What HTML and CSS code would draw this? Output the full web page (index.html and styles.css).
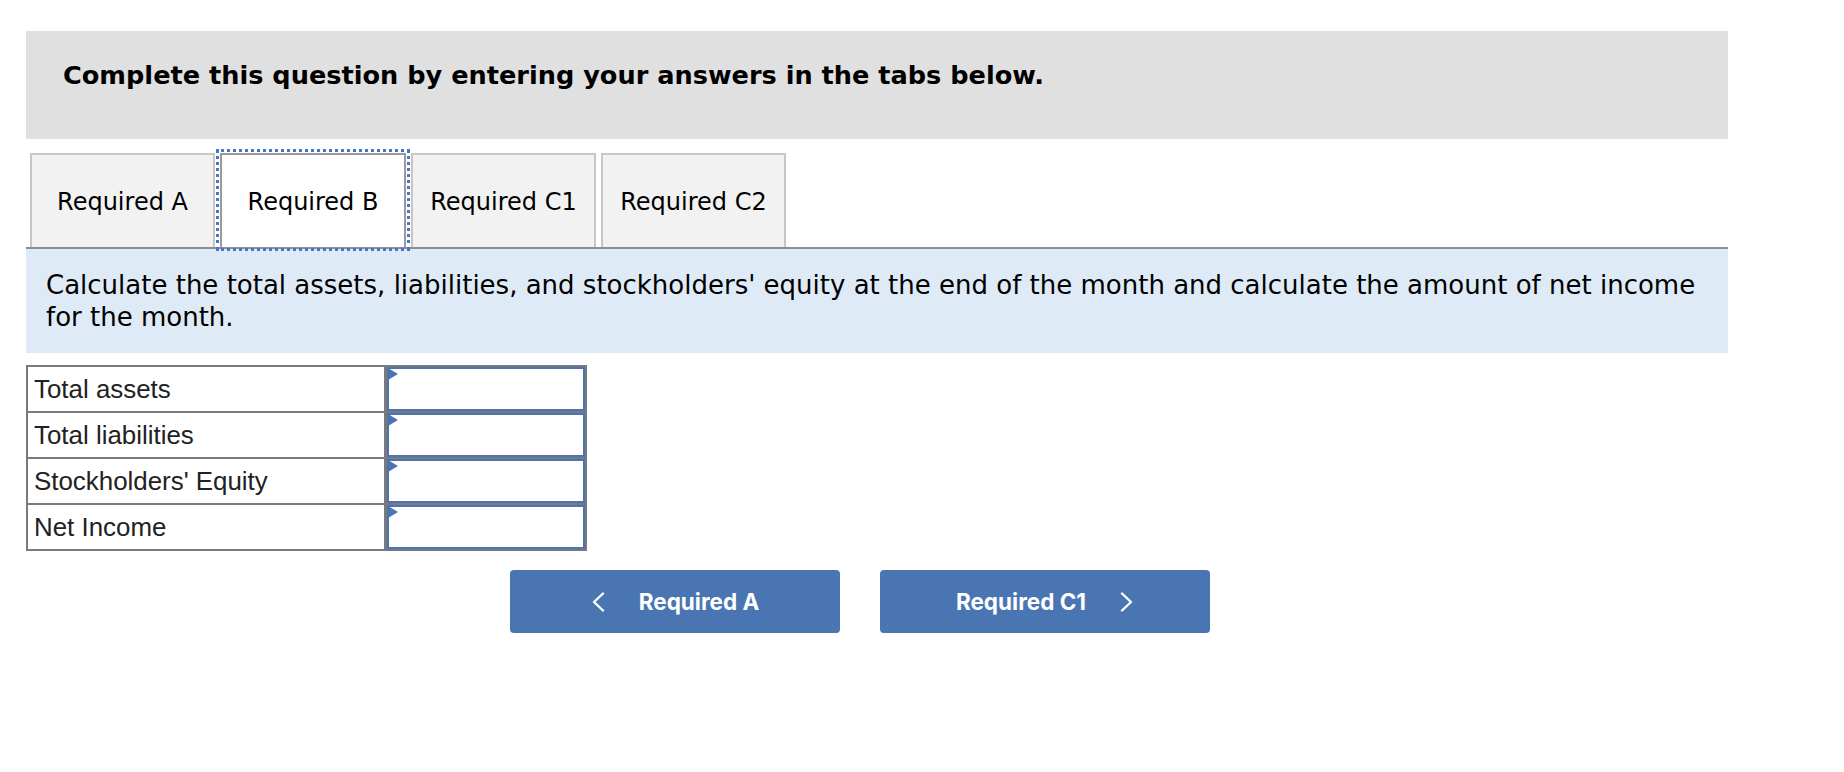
FILE: index.html
```html
<!DOCTYPE html>
<html>
<head>
<meta charset="utf-8">
<link rel="stylesheet" href="styles.css">
</head>
<body>
<div class="page">
  <div class="prompt">
    <h2 class="prompt-text">Complete this question by entering your answers in the tabs below.</h2>
  </div>

  <div class="tabs">
    <div class="tab">Required A</div>
    <div class="tab tab-active">Required B</div>
    <div class="tab">Required C1</div>
    <div class="tab">Required C2</div>
  </div>

  <div class="instructions">
    <p>Calculate the total assets, liabilities, and stockholders' equity at the end of the month and calculate the amount of net income for the month.</p>
  </div>

  <div class="answers">
    <div class="label">Total assets</div><div class="entry"><span class="field"><span class="flag"></span></span></div>
    <div class="label">Total liabilities</div><div class="entry"><span class="field"><span class="flag"></span></span></div>
    <div class="label">Stockholders' Equity</div><div class="entry"><span class="field"><span class="flag"></span></span></div>
    <div class="label">Net Income</div><div class="entry"><span class="field"><span class="flag"></span></span></div>
  </div>

  <div class="nav">
    <button class="nav-btn">
      <svg class="chev" width="14" height="20" viewBox="0 0 14 20"><polyline points="12,1.5 3,10 12,18.5" fill="none" stroke="#fff" stroke-width="2.4" stroke-linecap="round" stroke-linejoin="round"/></svg>
      <span>Required A</span>
    </button>
    <button class="nav-btn">
      <span>Required C1</span>
      <svg class="chev" width="14" height="20" viewBox="0 0 14 20"><polyline points="2,1.5 11,10 2,18.5" fill="none" stroke="#fff" stroke-width="2.4" stroke-linecap="round" stroke-linejoin="round"/></svg>
    </button>
  </div>
</div>
</body>
</html>
```

FILE: styles.css
```css
html, body {
  margin: 0;
  padding: 0;
  background: #ffffff;
}

.page {
  margin-left: 26px;
  width: 1702px;
  padding-top: 31px;
}

.prompt {
  background: #e0e0e0;
  height: 108px;
  padding-left: 37px;
  box-sizing: border-box;
  padding-top: 19px;
}

.prompt-text {
  margin: 0;
  font-family: "DejaVu Sans", Verdana, sans-serif;
  font-weight: bold;
  font-size: 25.6px;
  line-height: 50px;
  color: #000;
}

.tabs {
  display: flex;
  gap: 5px;
  padding-left: 4px;
  margin-top: 14px;
  border-bottom: 2px solid #8e8e8e;
}

.tab {
  width: 185px;
  height: 94px;
  box-sizing: border-box;
  border: 2px solid #c6c6c6;
  border-bottom: none;
  background: #f2f2f2;
  display: flex;
  align-items: center;
  justify-content: center;
  padding-top: 2px;
  font-family: "DejaVu Sans", Verdana, sans-serif;
  font-size: 24px;
  color: #000;
}

.tab-active {
  width: 186px;
  background: #ffffff;
  border-color: #999999;
  outline: 3px dotted #4a74c4;
  outline-offset: 1px;
}

.instructions {
  background: #dfeaf7;
  padding: 21px 20px 20px 20px;
}

.instructions p {
  margin: 0;
  font-family: "DejaVu Sans", Verdana, sans-serif;
  font-size: 26px;
  line-height: 31.5px;
  color: #000;
}

.answers {
  margin-top: 12px;
  display: grid;
  grid-template-columns: 358px 201px;
  grid-auto-rows: 46px;
  width: 561px;
  border-top: 2px solid #7a7a7a;
  border-left: 2px solid #7a7a7a;
  box-sizing: border-box;
}

.label,
.entry {
  border-right: 2px solid #7a7a7a;
  border-bottom: 2px solid #7a7a7a;
}

.label {
  display: flex;
  align-items: center;
  padding-left: 6px;
  font-family: "Liberation Sans", Arial, sans-serif;
  font-size: 25.9px;
  color: #222;
}

.entry {
  padding-left: 1px;
  background: #7a7a7a;
}

.field {
  display: block;
  height: 100%;
  box-sizing: border-box;
  border: 2px solid #4a74b4;
  background: #fff;
  position: relative;
}

.flag {
  position: absolute;
  left: -1px;
  top: -1px;
  width: 0;
  height: 0;
  border-top: 6.5px solid transparent;
  border-bottom: 6.5px solid transparent;
  border-left: 10px solid #4a74b4;
}

.nav {
  display: flex;
  gap: 40px;
  margin-left: 484px;
  margin-top: 19px;
}

.nav-btn {
  width: 330px;
  height: 63px;
  border: none;
  border-radius: 4px;
  background: #4a75b3;
  color: #fff;
  display: flex;
  align-items: center;
  justify-content: center;
  gap: 34px;
  font-family: Inter, "Liberation Sans", sans-serif;
  font-weight: 700;
  font-size: 22.5px;
  padding: 0;
}

.chev {
  display: block;
}
```
